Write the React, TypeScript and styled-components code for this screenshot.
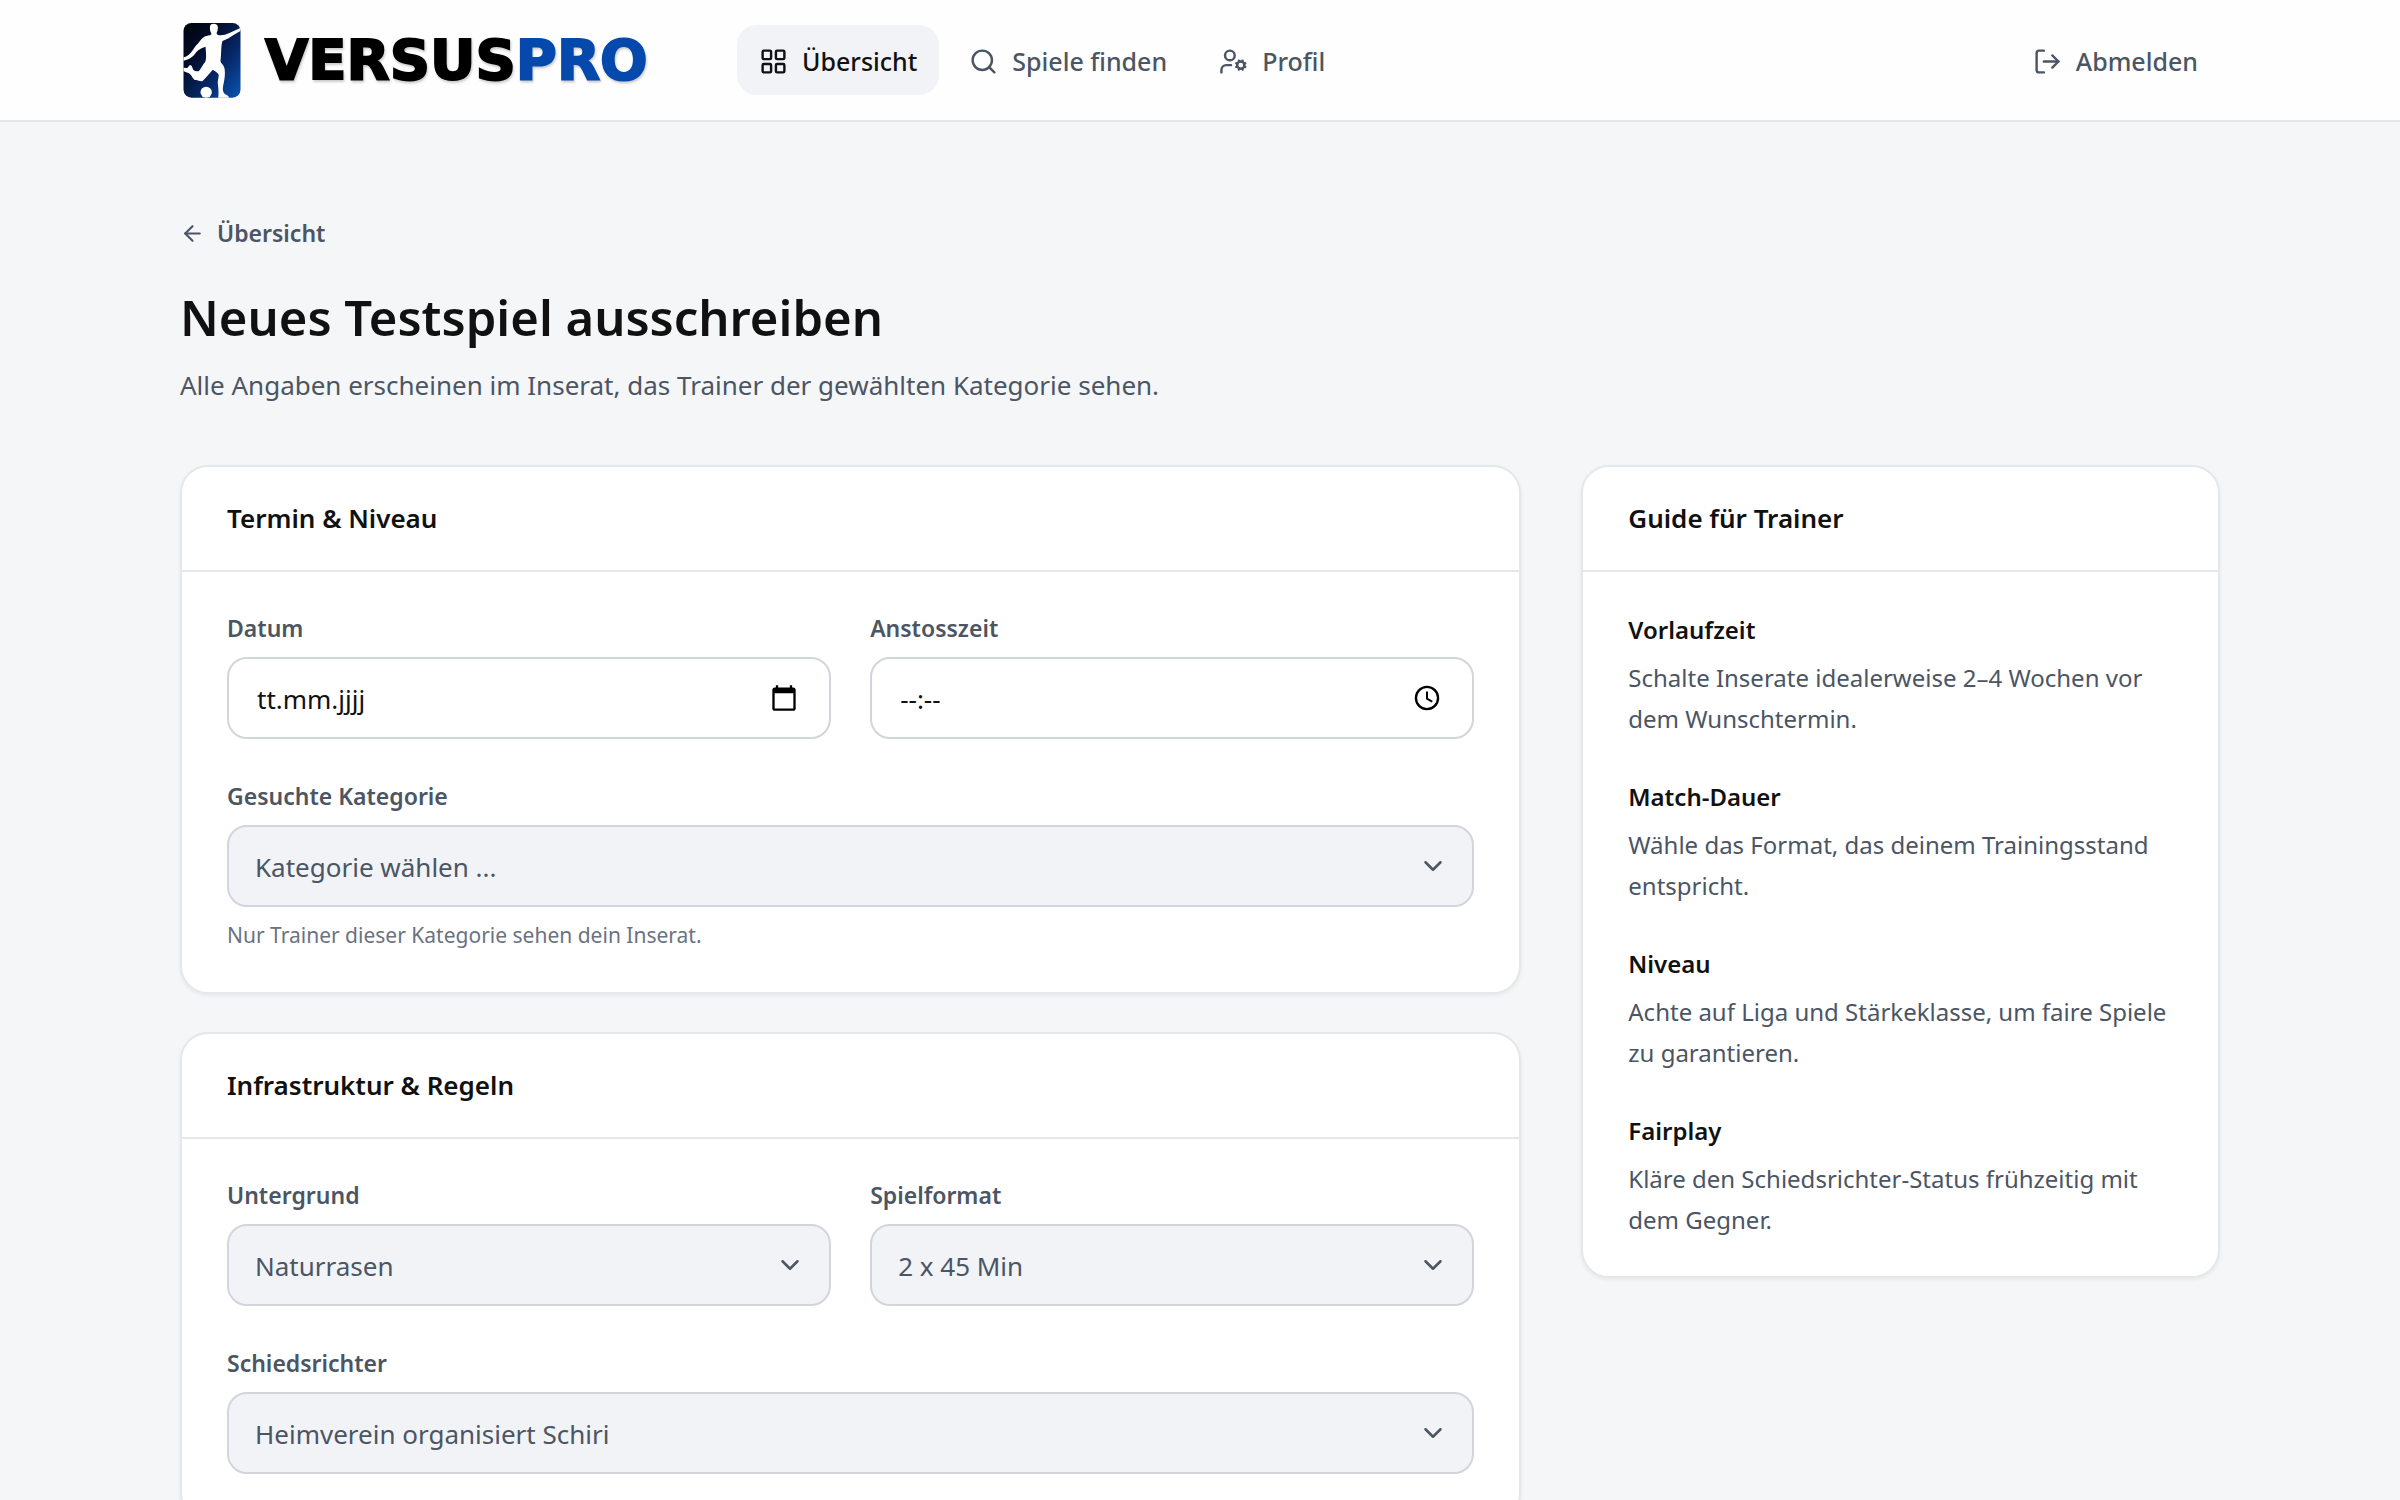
import React, { useId, useState } from "react";
import styled, { createGlobalStyle } from "styled-components";
import {
  ArrowLeft,
  ChevronDown,
  LayoutGrid,
  LogOut,
  Search,
  UserCog,
} from "lucide-react";

const color = {
  page: "#f5f6f8",
  surface: "#ffffff",
  muted: "#f1f3f7",
  ink: "#111111",
  slate: "#4b5563",
  hint: "#6b7280",
  line: "#e5e7e9",
  field: "#d2d5db",
  brand: "#0449ab",
};

const GlobalStyle = createGlobalStyle`
  *, *::before, *::after { box-sizing: border-box; }
  body {
    margin: 0;
    background: ${color.page};
    color: ${color.ink};
    font-family: "Noto Sans", "Open Sans", sans-serif;
    font-size: 26px;
  }
  h1, h2, h3, p { margin: 0; }
  button, input, select { font: inherit; color: inherit; }
`;

const Container = styled.div`
  width: 85%;
  max-width: 2040px;
  margin: 0 auto;
`;

const Header = styled.header`
  background: #fefefe;
  border-bottom: 2px solid ${color.line};
`;

const HeaderRow = styled(Container)`
  display: flex;
  align-items: center;
  min-height: 120px;
`;

const Brand = styled.a`
  display: flex;
  align-items: center;
  gap: 24px;
  flex: 0 0 557px;
  padding-left: 3px;
  text-decoration: none;
`;

const Wordmark = styled.span`
  font: 700 56px/64px "DejaVu Sans", sans-serif;
  color: #000;
  -webkit-text-stroke: 2px currentColor;
  filter: drop-shadow(1px 2px 1px rgba(0, 0, 0, 0.2));

  span { color: ${color.brand}; }
`;

const Nav = styled.nav`
  display: flex;
  gap: 8px;
  flex: 1;
`;

const navItem = `
  display: inline-flex;
  align-items: center;
  gap: 14px;
  height: 70px;
  padding: 2px 22px 0;
  border: 0;
  border-radius: 20px;
  font-size: 25px;
  font-weight: 500;
  line-height: 36px;
  text-decoration: none;
  white-space: nowrap;
`;

const NavLink = styled.a<{ $active?: boolean }>`
  ${navItem}
  background: ${(p) => (p.$active ? color.muted : "transparent")};
  color: ${(p) => (p.$active ? color.ink : color.slate)};
`;

const LogoutButton = styled.button`
  ${navItem}
  background: transparent;
  color: ${color.slate};
  cursor: pointer;
`;

const Main = styled(Container).attrs({ as: "main" })`
  padding: 92px 0 60px;
`;

const BackLink = styled.a`
  display: inline-flex;
  align-items: center;
  gap: 12px;
  color: ${color.slate};
  font-size: 23px;
  font-weight: 600;
  line-height: 38px;
  text-decoration: none;
`;

const Title = styled.h1`
  margin-top: 29px;
  font-size: 49px;
  font-weight: 600;
  line-height: 68px;
`;

const Lead = styled.p`
  margin-top: 12px;
  color: ${color.slate};
  line-height: 44px;
`;

const Columns = styled.div`
  display: grid;
  grid-template-columns: minmax(0, 21fr) minmax(0, 10fr);
  align-items: start;
  gap: 60px;
  margin-top: 58px;
`;

const Form = styled.form`
  display: grid;
  gap: 38px;
`;

const Card = styled.section`
  background: ${color.surface};
  border: 2px solid ${color.line};
  border-radius: 28px;
  box-shadow: 0 2px 4px rgba(17, 24, 39, 0.06);
`;

const CardTitle = styled.h2`
  padding: 32px 45px 33px;
  border-bottom: 2px solid ${color.line};
  font-size: 26px;
  font-weight: 600;
  line-height: 38px;
`;

const CardBody = styled.div`
  display: grid;
  grid-template-columns: repeat(2, minmax(0, 1fr));
  gap: 39px;
  padding: 38px 45px 45px;
`;

const Field = styled.div<{ $wide?: boolean }>`
  grid-column: ${(p) => (p.$wide ? "1 / -1" : "auto")};
`;

const Label = styled.label`
  display: block;
  margin-bottom: 11px;
  color: ${color.slate};
  font-size: 23px;
  font-weight: 600;
  line-height: 36px;
`;

const ControlBox = styled.div<{ $tone: "plain" | "muted" }>`
  position: relative;
  display: flex;
  align-items: center;
  height: 82px;
  border: 2px solid ${color.field};
  border-radius: 20px;
  background: ${(p) => (p.$tone === "muted" ? color.muted : color.surface)};
`;

const TextInput = styled.input`
  flex: 1;
  min-width: 0;
  height: 100%;
  padding: 2px 0 0 28px;
  border: 0;
  outline: 0;
  background: transparent;

  &::placeholder { color: ${color.ink}; opacity: 1; }
`;

const PickerButton = styled.button`
  display: flex;
  margin-right: 31px;
  padding: 0;
  border: 0;
  background: transparent;
  color: #000;
`;

const Select = styled.select`
  width: 100%;
  height: 100%;
  padding: 2px 72px 0 26px;
  border: 0;
  outline: 0;
  border-radius: 20px;
  appearance: none;
  background: transparent;
  color: ${color.slate};
`;

const SelectArrow = styled(ChevronDown)`
  position: absolute;
  right: 24px;
  color: ${color.slate};
  pointer-events: none;
`;

const Hint = styled.p`
  margin-top: 16px;
  color: ${color.hint};
  font-size: 21px;
  line-height: 24px;
`;

const GuideList = styled.div`
  display: grid;
  gap: 39px;
  padding: 39px 45px 36px;
`;

const GuideTitle = styled.h3`
  margin-bottom: 8px;
  font-size: 24px;
  font-weight: 600;
  line-height: 38px;
`;

const GuideText = styled.p`
  color: ${color.slate};
  font-size: 24px;
  line-height: 41px;
`;

function Emblem() {
  return (
    <svg width="58" height="75" viewBox="39 36 173 225" aria-hidden="true">
      <defs>
        <linearGradient id="emblem" x1="0" y1="0" x2="1" y2="1">
          <stop offset="0" stopColor="#01030c" />
          <stop offset="0.3" stopColor="#020c26" />
          <stop offset="0.65" stopColor="#06296a" />
          <stop offset="1" stopColor="#0a55b4" />
        </linearGradient>
        <clipPath id="emblemClip">
          <rect x="40" y="36" width="171" height="224" rx="24" />
        </clipPath>
      </defs>
      <rect x="40" y="36" width="171" height="224" rx="24" fill="url(#emblem)" />
      <g fill="#fff" clipPath="url(#emblemClip)">
        <path d="M120 44C121 36 142 35 143 47C144 55 141 62 139 67L143 72C154 74 166 72 176 67L212 50V59L190 72C180 80 168 86 157 90C152 104 154 128 151 150C151 157 160 160 163 172C166 190 163 205 159 224C157 236 158 243 164 249C169 253 176 254 177 261H144C146 247 145 232 143 218C142 205 147 198 145 190C141 184 134 180 128 176C118 186 109 199 98 209C92 214 84 206 76 207C68 208 66 192 56 187L39 180V170L50 171C56 171 55 162 61 163C68 164 66 177 73 179C79 181 83 182 87 179C94 171 98 160 105 153C110 140 107 122 106 107C95 110 84 116 78 124C71 134 63 144 39 150V139C52 137 60 128 66 120C74 108 77 103 83 98C91 88 97 79 107 75C113 73 122 74 124 68C120 62 118 54 120 44Z" />
        <circle cx="108" cy="244" r="17" />
      </g>
    </svg>
  );
}

function CalendarIcon() {
  return (
    <svg width="28" height="28" viewBox="0 0 24 24" fill="currentColor" aria-hidden="true">
      <path d="M20 3h-1V1h-2v2H7V1H5v2H4c-1.1 0-2 .9-2 2v16c0 1.1.9 2 2 2h16c1.1 0 2-.9 2-2V5c0-1.1-.9-2-2-2zm0 18H4V8h16v13z" />
    </svg>
  );
}

function ClockIcon() {
  return (
    <svg width="28" height="28" viewBox="0 0 24 24" fill="none" stroke="currentColor" strokeWidth="2" aria-hidden="true">
      <circle cx="12" cy="12" r="9.5" />
      <path d="M12 6.5V12.5L16.5 15.2" strokeWidth="1.7" />
    </svg>
  );
}

type PickerProps = {
  label: string;
  placeholder: string;
  action: string;
  icon: React.ReactNode;
};

function PickerField({ label, placeholder, action, icon }: PickerProps) {
  const id = useId();
  return (
    <Field>
      <Label htmlFor={id}>{label}</Label>
      <ControlBox $tone="plain">
        <TextInput id={id} type="text" placeholder={placeholder} />
        <PickerButton type="button" aria-label={action}>
          {icon}
        </PickerButton>
      </ControlBox>
    </Field>
  );
}

type SelectProps = {
  label: string;
  options: string[];
  wide?: boolean;
  hint?: string;
};

function SelectField({ label, options, wide, hint }: SelectProps) {
  const id = useId();
  const [value, setValue] = useState(options[0]);
  return (
    <Field $wide={wide}>
      <Label htmlFor={id}>{label}</Label>
      <ControlBox $tone="muted">
        <Select id={id} value={value} onChange={(e) => setValue(e.target.value)}>
          {options.map((option) => (
            <option key={option}>{option}</option>
          ))}
        </Select>
        <SelectArrow size={30} strokeWidth={2} />
      </ControlBox>
      {hint && <Hint>{hint}</Hint>}
    </Field>
  );
}

const guide = [
  ["Vorlaufzeit", "Schalte Inserate idealerweise 2–4 Wochen vor dem Wunschtermin."],
  ["Match-Dauer", "Wähle das Format, das deinem Trainingsstand entspricht."],
  ["Niveau", "Achte auf Liga und Stärkeklasse, um faire Spiele zu garantieren."],
  ["Fairplay", "Kläre den Schiedsrichter-Status frühzeitig mit dem Gegner."],
];

export default function App() {
  return (
    <>
      <GlobalStyle />
      <Header>
        <HeaderRow>
          <Brand href="#">
            <Emblem />
            <Wordmark>
              VERSUS<span>PRO</span>
            </Wordmark>
          </Brand>
          <Nav>
            <NavLink href="#" $active>
              <LayoutGrid size={29} strokeWidth={2} />
              Übersicht
            </NavLink>
            <NavLink href="#">
              <Search size={29} strokeWidth={2} />
              Spiele finden
            </NavLink>
            <NavLink href="#">
              <UserCog size={29} strokeWidth={2} />
              Profil
            </NavLink>
          </Nav>
          <LogoutButton type="button">
            <LogOut size={29} strokeWidth={2} />
            Abmelden
          </LogoutButton>
        </HeaderRow>
      </Header>

      <Main>
        <BackLink href="#">
          <ArrowLeft size={25} strokeWidth={2} />
          Übersicht
        </BackLink>
        <Title>Neues Testspiel ausschreiben</Title>
        <Lead>
          Alle Angaben erscheinen im Inserat, das Trainer der gewählten Kategorie sehen.
        </Lead>

        <Columns>
          <Form>
            <Card>
              <CardTitle>Termin &amp; Niveau</CardTitle>
              <CardBody>
                <PickerField
                  label="Datum"
                  placeholder="tt.mm.jjjj"
                  action="Datum wählen"
                  icon={<CalendarIcon />}
                />
                <PickerField
                  label="Anstosszeit"
                  placeholder="--:--"
                  action="Uhrzeit wählen"
                  icon={<ClockIcon />}
                />
                <SelectField
                  wide
                  label="Gesuchte Kategorie"
                  options={["Kategorie wählen ..."]}
                  hint="Nur Trainer dieser Kategorie sehen dein Inserat."
                />
              </CardBody>
            </Card>
            <Card>
              <CardTitle>Infrastruktur &amp; Regeln</CardTitle>
              <CardBody>
                <SelectField label="Untergrund" options={["Naturrasen"]} />
                <SelectField label="Spielformat" options={["2 x 45 Min"]} />
                <SelectField
                  wide
                  label="Schiedsrichter"
                  options={["Heimverein organisiert Schiri"]}
                />
              </CardBody>
            </Card>
          </Form>

          <Card as="aside">
            <CardTitle>Guide für Trainer</CardTitle>
            <GuideList>
              {guide.map(([title, text]) => (
                <div key={title}>
                  <GuideTitle>{title}</GuideTitle>
                  <GuideText>{text}</GuideText>
                </div>
              ))}
            </GuideList>
          </Card>
        </Columns>
      </Main>
    </>
  );
}
